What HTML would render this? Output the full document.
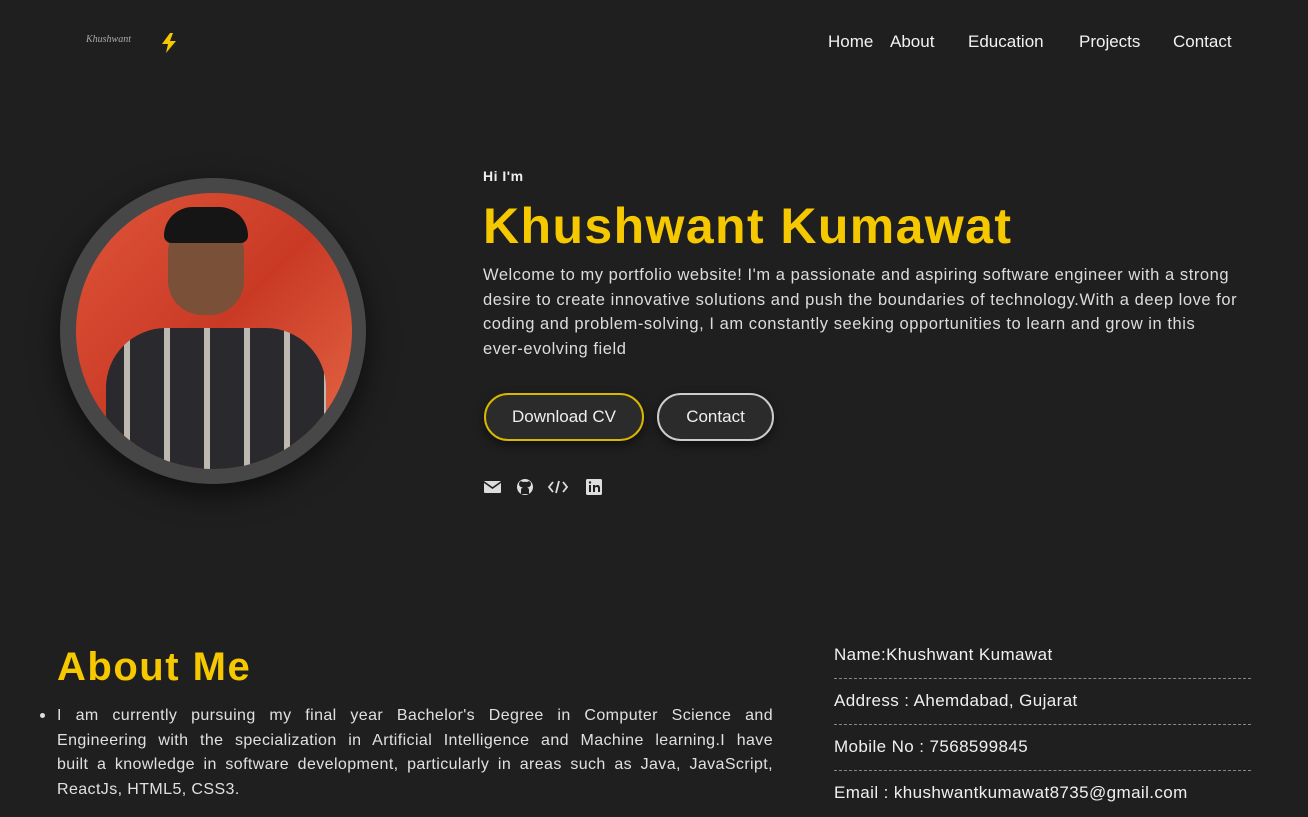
<!DOCTYPE html>
<html><head><meta charset="utf-8"><style>
*{margin:0;padding:0;box-sizing:border-box}
body{width:1308px;height:816px;overflow:hidden;background:#1f1f1f;font-family:"Liberation Sans",sans-serif;color:#e6e6e6;position:relative}
.abs{position:absolute}
nav a{position:absolute;top:32px;font-size:17px;color:#f2f2f2;text-decoration:none}
.btn{position:absolute;top:393px;height:48px;border-radius:24px;background:#2b2b2b;font-size:17px;color:#eee;display:flex;align-items:center;justify-content:center;box-shadow:0 4px 10px rgba(0,0,0,.5)}
.info{position:absolute;left:834px;width:417px;font-size:17px;letter-spacing:0.4px;color:#f0f0f0;border-bottom:1px dashed #888;height:34px}
.j{display:block;text-align:justify;text-align-last:justify;white-space:nowrap}
</style></head><body>
<div class="abs" style="left:86px;top:34px;font-family:'Liberation Serif',serif;font-style:italic;font-size:10px;color:#aaa">Khushwant</div>
<svg class="abs" style="left:160px;top:32px" width="18" height="22" viewBox="0 0 18 22"><path d="M10 1 L2 12 H8 L6 21 L16 9 H10 L13 1Z" fill="#f5c800"/></svg>
<nav><a style="left:828px">Home</a><a style="left:890px">About</a><a style="left:968px">Education</a><a style="left:1079px">Projects</a><a style="left:1173px">Contact</a></nav>

<div class="abs" style="left:60px;top:178px;width:306px;height:306px;border-radius:50%;background:#474747;box-shadow:0 10px 30px rgba(0,0,0,.6)"></div>
<div class="abs" style="left:76px;top:193px;width:276px;height:276px;border-radius:50%;overflow:hidden;background:linear-gradient(135deg,#e0553a,#c93a25 50%,#e76a48)">
 <div class="abs" style="left:30px;top:135px;width:220px;height:160px;border-radius:60px 60px 0 0;background:repeating-linear-gradient(90deg,#2a2a2e 0 18px,#bdb9b0 18px 24px,#2a2a2e 24px 40px)"></div>
 <div class="abs" style="left:92px;top:22px;width:76px;height:100px;border-radius:40px 40px 36px 36px;background:#7a5038"></div>
 <div class="abs" style="left:88px;top:14px;width:84px;height:36px;border-radius:40px 40px 10px 10px;background:#151515"></div>
</div>

<div class="abs" style="left:483px;top:168px;font-size:14px;font-weight:bold;color:#eee;letter-spacing:0.5px">Hi I'm</div>
<div class="abs" style="left:483px;top:197px;font-size:50px;font-weight:bold;color:#f5c800;letter-spacing:1.4px">Khushwant Kumawat</div>
<div class="abs" style="left:483px;top:263px;width:780px;font-size:16.5px;line-height:24.6px;color:#dcdcdc;letter-spacing:0.55px;white-space:nowrap">Welcome to my portfolio website! I'm a passionate and aspiring software engineer with a strong<br>desire to create innovative solutions and push the boundaries of technology.With a deep love for<br>coding and problem-solving, I am constantly seeking opportunities to learn and grow in this<br>ever-evolving field</div>
<div class="btn" style="left:484px;width:160px;border:2px solid #d9b800">Download CV</div>
<div class="btn" style="left:657px;width:117px;border:2px solid #ccc">Contact</div>
<svg class="abs" style="left:483px;top:478px" width="125" height="18" viewBox="0 0 125 18">
<rect x="1" y="3" width="17" height="12" rx="1" fill="#ddd"/><path d="M1 4 L9.5 10 L18 4" stroke="#1f1f1f" stroke-width="1.6" fill="none"/>
<circle cx="42" cy="9" r="8" fill="#ddd"/><path d="M38 16 V12 Q38 10 40 9.5 Q36 9 36 6 Q36 4 38 3 L40 4 Q42 3.5 44 4 L46 3 Q48 4 48 6 Q48 9 44 9.5 Q46 10 46 12 V16Z" fill="#1f1f1f"/>
<path d="M70 4 L66 9 L70 14 M76 3 L73 15 M80 4 L84 9 L80 14" stroke="#ddd" stroke-width="1.8" fill="none"/>
<rect x="103" y="1" width="16" height="16" rx="1.5" fill="#ddd"/><rect x="106" y="7" width="2" height="7" fill="#1f1f1f"/><circle cx="107" cy="4.5" r="1.2" fill="#1f1f1f"/><path d="M110 14 V7 H112 V8 Q113 6.8 115 7 Q117 7.5 117 10 V14 H115 V10.5 Q115 9 113.5 9 Q112 9 112 10.5 V14Z" fill="#1f1f1f"/>
</svg>

<div class="abs" style="left:57px;top:645px;font-size:40px;font-weight:bold;color:#f5c800;letter-spacing:1.5px">About Me</div>
<div class="abs" style="left:40px;top:713px;width:5px;height:5px;border-radius:50%;background:#ddd"></div>
<div class="abs" style="left:57px;top:704px;width:716px;font-size:16px;line-height:24.5px;color:#e0e0e0;letter-spacing:0.4px">
<span class="j">I am currently pursuing my final year Bachelor's Degree in Computer Science and</span>
<span class="j">Engineering with the specialization in Artificial Intelligence and Machine learning.I have</span>
<span class="j">built a knowledge in software development, particularly in areas such as Java, JavaScript,</span>
<span style="display:block">ReactJs, HTML5, CSS3.</span></div>
<div class="info" style="top:645px">Name:Khushwant Kumawat</div>
<div class="info" style="top:691px">Address : Ahemdabad, Gujarat</div>
<div class="info" style="top:737px">Mobile No : 7568599845</div>
<div class="info" style="top:783px;border:none">Email : khushwantkumawat8735@gmail.com</div>
</body></html>
